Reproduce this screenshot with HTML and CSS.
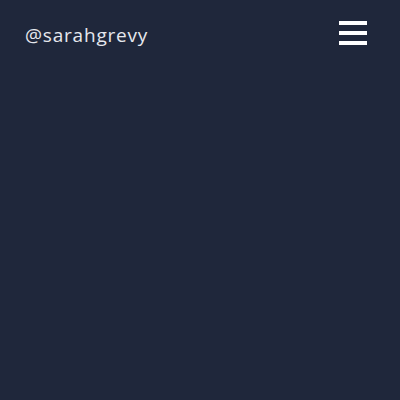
FILE: index.html
```html
<!DOCTYPE html>
<html>
<head>
<meta charset="utf-8">
<link rel="stylesheet" href="styles.css">
</head>
<body>
<header class="nav">
  <span class="handle">@sarahgrevy</span>
  <button class="menu" aria-label="Menu">
    <span class="bar"></span><span class="bar"></span><span class="bar"></span>
  </button>
</header>
</body>
</html>
```
FILE: styles.css
```css
html, body {
  margin: 0;
  padding: 0;
  background: #1f273b;
  height: 100%;
}
.nav {
  display: flex;
  justify-content: space-between;
  align-items: flex-start;
  padding: 21px 33px 0 25px;
}
.handle {
  font-family: "Open Sans", sans-serif;
  font-size: 19px;
  letter-spacing: 0.8px;
  color: #e6e8ee;
  line-height: 28px;
}
.menu {
  background: none;
  border: 0;
  padding: 0;
  margin: 0;
  width: 28px;
  display: flex;
  flex-direction: column;
  gap: 6px;
}
.bar {
  display: block;
  height: 4px;
  width: 28px;
  background: #ffffff;
}
```
